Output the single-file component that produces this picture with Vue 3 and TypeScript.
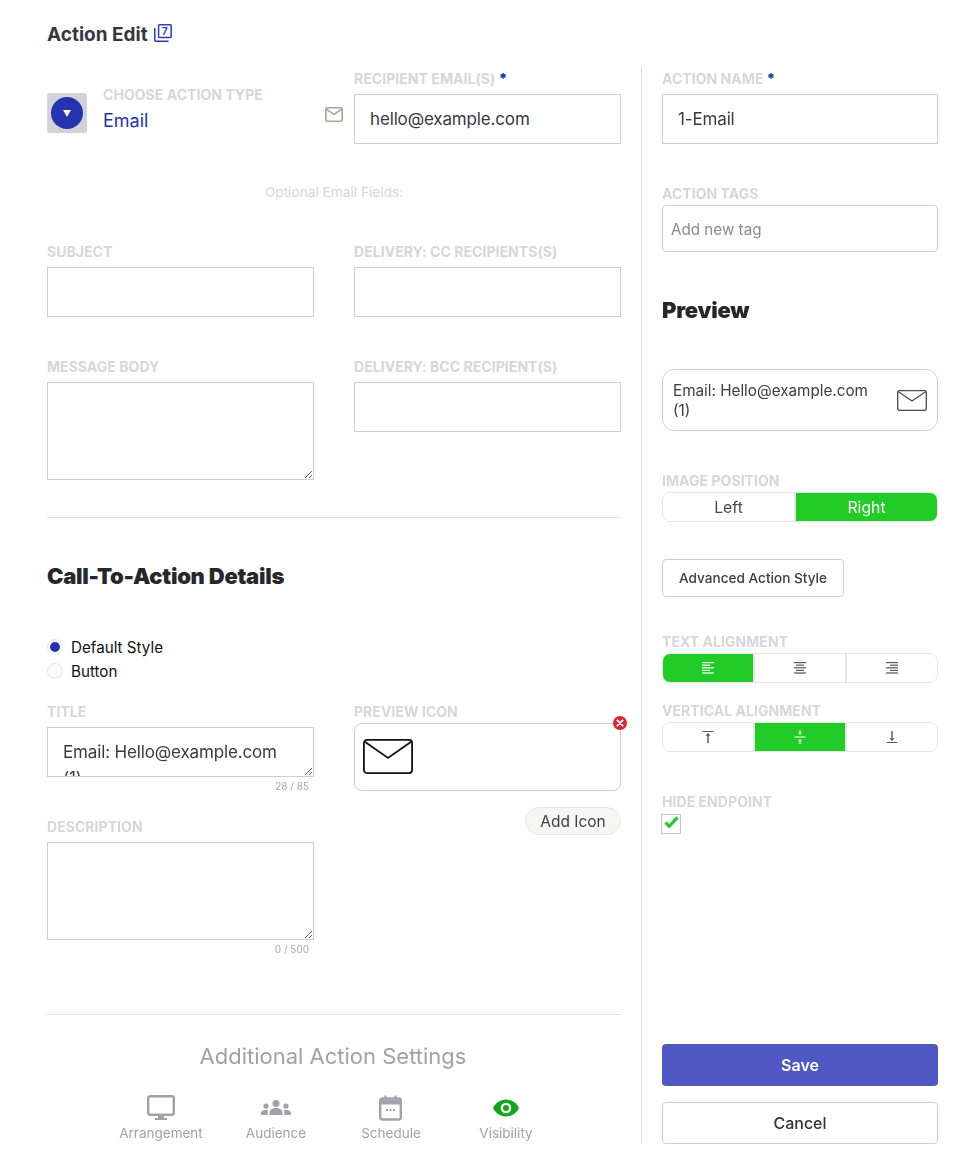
<script setup lang="ts">
import { ref } from 'vue';

const title = ref('Email: Hello@example.com (1)');
const email = ref('hello@example.com');
const actionName = ref('1-Email');

const settings = [
  { key: 'arrangement', label: 'Arrangement' },
  { key: 'audience', label: 'Audience' },
  { key: 'schedule', label: 'Schedule' },
  { key: 'visibility', label: 'Visibility', active: true },
];
const hAlign = [
  { key: 'left', on: true, rows: [[0, 12], [0, 8], [0, 12], [0, 8], [0, 12]] },
  { key: 'center', on: false, rows: [[0, 12], [2, 8], [0, 12], [2, 8], [0, 12]] },
  { key: 'right', on: false, rows: [[0, 12], [4, 8], [0, 12], [4, 8], [0, 12]] },
];
</script>

<template>
  <div class="page">
    <header class="page-head">
      <h1>Action Edit</h1>
      <svg class="count-icon" width="18" height="18" viewBox="0 0 18 18" fill="none" stroke="#2f3db5" stroke-width="1.500">
        <rect x="4.600" y="0.800" width="12.600" height="12.600" rx="0.800" />
        <path d="M.8 4v12.400a.8.8 0 0 0 .8.8H14.500" />
        <text x="10.900" y="10.900" text-anchor="middle" font-size="10.500" font-weight="600" fill="#2f3db5" stroke="none">7</text>
      </svg>
    </header>

    <main class="main">
      <section class="left">
        <div class="two-col">
          <div class="type-picker">
            <div class="type-swatch"><span class="type-dot"><i></i></span></div>
            <div class="type-text">
              <div class="label">Choose Action Type</div>
              <div class="type-value">Email</div>
            </div>
            <svg class="type-mail" width="18" height="15" viewBox="0 0 18 15" fill="none" stroke="#a9a79b" stroke-width="1.600">
              <rect x="0.800" y="0.800" width="16.400" height="13.400" rx="1.400" />
              <path d="M1 2l8 5.400L17 2" />
            </svg>
          </div>
          <div>
            <div class="label">Recipient Email(s) <b>*</b></div>
            <input v-model="email" class="field" />
          </div>
        </div>

        <p class="optional">Optional Email Fields:</p>

        <div class="two-col email-fields">
          <div>
            <div class="label">Subject</div>
            <input class="field" />
          </div>
          <div>
            <div class="label">Delivery: CC Recipients(s)</div>
            <input class="field" />
          </div>
          <div>
            <div class="label">Message Body</div>
            <textarea class="area"></textarea>
          </div>
          <div>
            <div class="label">Delivery: BCC Recipient(s)</div>
            <input class="field" />
          </div>
        </div>

        <hr class="rule rule-one" />

        <h2 class="cta-title">Call-To-Action Details</h2>

        <div class="radios">
          <div class="radio-row"><span class="radio on"></span>Default Style</div>
          <div class="radio-row"><span class="radio"></span>Button</div>
        </div>

        <div class="two-col cta-fields">
          <div>
            <div class="label">Title</div>
            <textarea v-model="title" class="area title-area"></textarea>
            <div class="counter">28 / 85</div>
            <div class="label desc-label">Description</div>
            <textarea class="area"></textarea>
            <div class="counter">0 / 500</div>
          </div>
          <div>
            <div class="label">Preview Icon</div>
            <div class="icon-box">
              <svg width="50" height="35" viewBox="0 0 50 35" fill="none" stroke="#111" stroke-width="1.800">
                <rect x="0.900" y="0.900" width="48.200" height="33.200" rx="3" />
                <path d="M1.500 2.500l23.500 16.500L48.500 2.500" />
              </svg>
              <span class="remove">
                <svg width="8" height="8" viewBox="0 0 8 8" stroke="#fff" stroke-width="1.800" stroke-linecap="round">
                  <path d="M1.300 1.300l5.400 5.400M6.700 1.300l-5.400 5.400" />
                </svg>
              </span>
            </div>
            <div class="add-row"><button class="add-icon">Add Icon</button></div>
          </div>
        </div>

        <hr class="rule rule-two" />

        <h3 class="more-title">Additional Action Settings</h3>
        <div class="tabs">
          <div v-for="s in settings" :key="s.key" class="tab" :class="{ active: s.active }">
            <svg v-if="s.key === 'arrangement'" width="28" height="26" viewBox="0 0 28 26" fill="none">
              <rect x="1.200" y="1.200" width="25.600" height="18.600" rx="2" stroke="#a1a1ab" stroke-width="2.400" />
              <path d="M11 20h6v3h-6zM8 23h12v2H8z" fill="#a1a1ab" />
            </svg>
            <svg v-else-if="s.key === 'audience'" width="30" height="26" viewBox="0 0 30 26" fill="#a1a1ab">
              <circle cx="15" cy="8.500" r="3.500" />
              <circle cx="5" cy="11" r="2.600" />
              <circle cx="25" cy="11" r="2.600" />
              <path d="M8.500 20v-2.500c0-2.600 3-4.500 6.500-4.500s6.500 1.900 6.500 4.500V20zM0 20v-1.500C0 16 2 14.800 6.500 14.800 6.900 14.800 7 15.500 6.800 16.500 6.700 17.600 6.800 19 6.800 20zM30 20v-1.500c0-2.500-2-3.700-6.500-3.700-.4 0-.5.700-.3 1.700.1 1.100 0 2.500 0 3.500z" />
            </svg>
            <svg v-else-if="s.key === 'schedule'" width="24" height="26" viewBox="0 0 24 26" fill="none">
              <rect x="1.200" y="3.500" width="20.600" height="21" rx="2.200" stroke="#a1a1ab" stroke-width="2.400" />
              <path d="M1 4.500h21v5H1z" fill="#a1a1ab" />
              <path d="M5.500 .5h2v4h-2zM15.500 .5h2v4h-2z" fill="#a1a1ab" />
              <path d="M7 14h2v2H7zM10.500 14h2v2h-2zM14 14h2v2h-2z" fill="#a1a1ab" />
            </svg>
            <svg v-else width="28" height="26" viewBox="0 0 28 26">
              <path d="M14 4.500c6 0 10.800 4 13 8.500-2.200 4.500-7 8.500-13 8.500S3.200 17.500 1 13c2.200-4.500 7-8.500 13-8.500z" fill="#15a51c" />
              <circle cx="14" cy="13" r="5.300" fill="#fff" />
              <circle cx="14" cy="13" r="3" fill="#15a51c" />
            </svg>
            <span>{{ s.label }}</span>
          </div>
        </div>
      </section>

      <aside class="right">
        <div class="label">Action Name <b>*</b></div>
        <input v-model="actionName" class="field name-field" />

        <div class="label tags-label">Action Tags</div>
        <input class="tag-input" placeholder="Add new tag" />

        <h2 class="preview-title">Preview</h2>

        <div class="preview-card">
          <span>Email: Hello@example.com (1)</span>
          <svg width="30" height="21" viewBox="0 0 30 21" fill="none" stroke="#4a4a4f" stroke-width="1.300">
            <rect x="0.700" y="0.700" width="28.600" height="19.600" rx="1.600" />
            <path d="M1 1.500l14 9.500L29 1.500" />
          </svg>
        </div>

        <div class="label pos-label">Image Position</div>
        <div class="segment seg-text">
          <div class="seg-item seg-left">Left</div>
          <div class="seg-item seg-right on">Right</div>
        </div>

        <button class="advanced">Advanced Action Style</button>

        <div class="label align-label">Text Alignment</div>
        <div class="segment">
          <div v-for="a in hAlign" :key="a.key" class="seg-item" :class="{ on: a.on }">
            <svg width="12" height="12" viewBox="0 0 12 12" :fill="a.on ? '#fff' : '#55555c'">
              <rect v-for="(r, i) in a.rows" :key="i" :x="r[0]" :y="i * 2.600" :width="r[1]" height="1.200" />
            </svg>
          </div>
        </div>

        <div class="label valign-label">Vertical Alignment</div>
        <div class="segment">
          <div class="seg-item">
            <svg width="12" height="12" viewBox="0 0 12 12" fill="#55555c">
              <path d="M.5 0h11v1H.500zM5.300 4.500h1.400V12H5.300zM3.500 4.800L6 2l2.500 2.800z" />
            </svg>
          </div>
          <div class="seg-item on">
            <svg width="12" height="14" viewBox="0 0 12 14" fill="#fff">
              <path d="M.5 6.500h11v1H.500zM5.400 0h1.200v3H5.400zM3.800 2.500h4.400L6 5zM5.400 11h1.200v3H5.400zM3.800 11.500h4.400L6 9z" />
            </svg>
          </div>
          <div class="seg-item">
            <svg width="12" height="12" viewBox="0 0 12 12" fill="#55555c">
              <path d="M.5 11h11v1H.500zM5.300 0h1.400v7.500H5.300zM3.500 7.200L6 10l2.500-2.800z" />
            </svg>
          </div>
        </div>

        <div class="label hide-label">Hide Endpoint</div>
        <span class="check">
          <svg width="15" height="13" viewBox="0 0 16 14" fill="none" stroke="#1fcb24" stroke-width="3.400">
            <path d="M1.500 7l4 4 9-9.500" />
          </svg>
        </span>

        <div class="actions">
          <button class="save">Save</button>
          <button class="cancel">Cancel</button>
        </div>
      </aside>
    </main>
  </div>
</template>

<style>
body {
  background: #fff;
}
</style>

<style scoped>
.page {
  width: 969px;
  box-sizing: border-box;
  padding: 0 31px 13px 47px;
  font-family: Inter, "Liberation Sans", sans-serif;
  color: #333338;
}

.page-head {
  display: flex;
  align-items: center;
  gap: 6px;
  height: 66px;
  padding-top: 4px;
  box-sizing: border-box;
}

.page-head h1 {
  margin: 0;
  font-size: 19px;
  line-height: 24px;
  font-weight: 700;
  color: #37373d;
}

.count-icon {
  margin-top: -4px;
}

.main {
  display: flex;
}

.left {
  width: 595px;
  box-sizing: border-box;
  padding-right: 20px;
  border-right: 1px solid #e3e3e3;
}

.right {
  width: 276px;
  margin-left: 20px;
  padding-top: 5px;
  display: flex;
  flex-direction: column;
  align-items: flex-start;
}

.two-col {
  display: grid;
  grid-template-columns: 267px 267px;
  column-gap: 40px;
  padding-top: 5px;
}

.label {
  font-size: 14px;
  line-height: 16px;
  height: 16px;
  margin-bottom: 7px;
  font-weight: 700;
  letter-spacing: 0.05px;
  text-transform: uppercase;
  color: #d6d6db;
  white-space: nowrap;
}

.label b {
  color: #2433b0;
}

.field,
.area {
  display: block;
  box-sizing: border-box;
  width: 267px;
  height: 50px;
  border: 1px solid #cfcfcf;
  border-radius: 0;
  padding: 0 15px;
  font-family: inherit;
  font-size: 17px;
  letter-spacing: -0.15px;
  color: #3a3a40;
  background: #fff;
  outline: none;
}

.area {
  height: 98px;
  padding: 11px 15px;
  line-height: 26px;
}

.type-picker {
  display: flex;
  position: relative;
  height: 73px;
}

.type-swatch {
  width: 40px;
  height: 40px;
  margin-top: 22px;
  border-radius: 3px;
  background: #d2d2d8;
  display: flex;
  align-items: center;
  justify-content: center;
}

.type-dot {
  width: 32px;
  height: 32px;
  border-radius: 50%;
  background: #2433b0;
  display: flex;
  align-items: center;
  justify-content: center;
}

.type-dot i {
  width: 0;
  height: 0;
  border-left: 4px solid transparent;
  border-right: 4px solid transparent;
  border-top: 7px solid #fff;
}

.type-text {
  margin-left: 16px;
  padding-top: 16px;
}

.type-value {
  font-size: 18px;
  line-height: 22px;
  color: #2433b0;
}

.type-mail {
  margin-left: auto;
  margin-right: -29px;
  margin-top: 36px;
}

.optional {
  margin: 40px 0 0;
  height: 17px;
  font-size: 13.700px;
  line-height: 17px;
  text-align: center;
  color: #d6d6db;
}

.email-fields {
  padding-top: 43px;
  row-gap: 42px;
}

.rule {
  border: 0;
  border-top: 1px solid #e3e3e3;
  margin: 0;
}

.rule-one {
  margin-top: 37px;
}

.cta-title,
.preview-title {
  font-size: 22px;
  line-height: 28px;
  font-weight: 900;
  letter-spacing: -0.26px;
  color: #27272b;
}

.cta-title {
  margin: 44px 0 0;
}

.radios {
  margin-top: 45px;
}

.radio-row {
  display: flex;
  align-items: center;
  gap: 8px;
  height: 24px;
  font-size: 15.200px;
  color: #111;
}

.radio {
  position: relative;
  box-sizing: border-box;
  width: 16px;
  height: 16px;
  border-radius: 50%;
  border: 1px solid #e8e8e8;
  background: #fafafa;
}

.radio.on {
  background: #fff;
}

.radio.on::after {
  content: "";
  position: absolute;
  inset: 2px;
  border-radius: 50%;
  background: #2433b0;
}

.cta-fields {
  padding-top: 21px;
}

.title-area {
  height: 50px;
}

.counter {
  margin-top: 2px;
  height: 14px;
  padding-right: 5px;
  font-size: 10px;
  line-height: 14px;
  text-align: right;
  color: #a8a8ae;
}

.desc-label {
  margin-top: 26px;
}

.icon-box {
  position: relative;
  box-sizing: border-box;
  height: 68px;
  margin-top: -4px;
  border: 1px solid #cfcfcf;
  border-radius: 8px;
  padding: 15px 8px 0;
}

.remove {
  position: absolute;
  top: -8px;
  right: -7px;
  width: 14px;
  height: 14px;
  border-radius: 50%;
  background: #dd2530;
  display: flex;
  align-items: center;
  justify-content: center;
}

.add-row {
  display: flex;
  justify-content: flex-end;
  margin-top: 16px;
}

.add-icon {
  box-sizing: border-box;
  width: 96px;
  height: 28px;
  border: 1px solid #e6e6e2;
  border-radius: 14px;
  background: #f6f6f4;
  font-family: inherit;
  font-size: 15.500px;
  color: #3f3f44;
  padding: 0;
}

.rule-two {
  margin-top: 58px;
}

.more-title {
  margin: 27px 0 0;
  padding-right: 2px;
  font-size: 22px;
  line-height: 28px;
  font-weight: 400;
  text-align: center;
  color: #a1a1ab;
}

.tabs {
  display: flex;
  margin-top: 25px;
  height: 49px;
  padding-left: 56.500px;
}

.tab {
  width: 115px;
  display: flex;
  flex-direction: column;
  align-items: center;
  font-size: 13.500px;
  line-height: 17px;
  color: #a1a1ab;
}

.tab span {
  margin-top: 4px;
  white-space: nowrap;
}

.name-field {
  width: 276px;
}

.tags-label {
  margin-top: 42px;
  margin-bottom: 3px;
}

.tag-input {
  box-sizing: border-box;
  width: 276px;
  height: 47px;
  border: 1px solid #cfcfcf;
  border-radius: 4px;
  padding: 2px 8px 0;
  font-family: inherit;
  font-size: 15.200px;
  outline: none;
}

.tag-input::placeholder {
  color: #8c8c92;
}

.preview-title {
  margin: 44px 0 0;
}

.preview-card {
  box-sizing: border-box;
  width: 276px;
  height: 62px;
  margin-top: 45px;
  border: 1px solid #cfcfcf;
  border-radius: 12px;
  padding: 0 10px;
  display: flex;
  align-items: center;
  justify-content: space-between;
  font-size: 15.250px;
  line-height: 20px;
  color: #3c3c41;
}

.preview-card span {
  width: 205px;
  padding-top: 1px;
}

.pos-label {
  margin-top: 42px;
  margin-bottom: 3px;
}

.segment {
  box-sizing: border-box;
  width: 276px;
  height: 30px;
  display: flex;
  border: 1px solid #e6e6e2;
  border-radius: 8px;
  overflow: hidden;
}

.seg-item {
  flex: 1;
  display: flex;
  align-items: center;
  justify-content: center;
  font-size: 15.800px;
  color: #4a4a50;
  border-left: 2px solid #e6e6e2;
}

.seg-item:first-child {
  border-left: 0;
}

.seg-left {
  flex: 0 0 131px;
}

.seg-item.on {
  background: #20cc25;
  color: #fff;
}

.advanced {
  box-sizing: border-box;
  width: 182px;
  height: 38px;
  margin-top: 37px;
  border: 1px solid #cfcfcf;
  border-radius: 4px;
  background: #fff;
  font-family: inherit;
  font-size: 13.600px;
  font-weight: 500;
  color: #3c3c41;
  padding: 0;
}

.align-label {
  margin-top: 37px;
  margin-bottom: 3px;
}

.valign-label {
  margin-top: 20px;
  margin-bottom: 3px;
}

.hide-label {
  margin-top: 42px;
  margin-bottom: 4px;
}

.check {
  box-sizing: border-box;
  width: 20px;
  height: 20px;
  margin-left: -1px;
  padding-bottom: 3px;
  border: 1px solid #c6c6ba;
  display: flex;
  align-items: center;
  justify-content: center;
}

.actions {
  margin-top: auto;
  width: 276px;
  display: flex;
  flex-direction: column;
  gap: 16px;
}

.save,
.cancel {
  height: 42px;
  border-radius: 4px;
  font-family: inherit;
  font-size: 16px;
  font-weight: 600;
  padding: 0;
}

.save {
  border: 0;
  background: #5059c3;
  color: #fff;
}

.cancel {
  border: 1px solid #cfcfcf;
  background: #fff;
  color: #333338;
  font-weight: 500;
}
</style>
